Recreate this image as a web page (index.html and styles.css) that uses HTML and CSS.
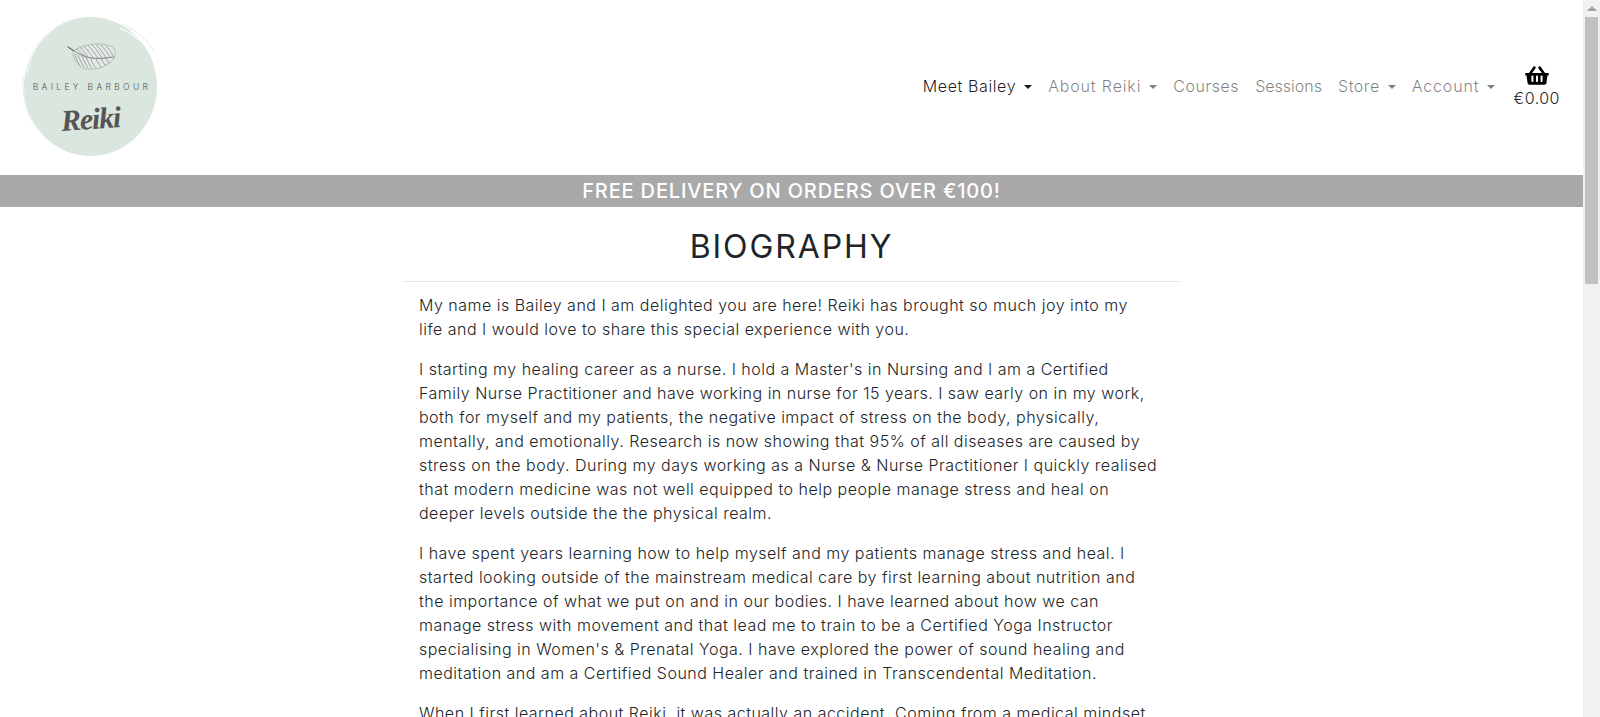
FILE: index.html
```html
<!DOCTYPE html>
<html lang="en">
<head>
<meta charset="utf-8">
<title>Biography</title>
<link rel="stylesheet" href="styles.css">
</head>
<body>
<div class="page">
  <div class="viewport">
    <header class="site-header">
      <a class="logo" href="#">
        <span class="logo-disc">
          <svg class="logo-paint" viewBox="0 0 145 151" width="145" height="151" aria-hidden="true">
            <ellipse cx="72.5" cy="75.5" rx="66.5" ry="69.5" fill="#dbe6df"/>
            <path d="M102 17 C115 23 125 30 132 40" fill="none" stroke="#fff" stroke-width="1.2"/>
            <path d="M104 13 C118 19 130 29 137 42" fill="none" stroke="#e3ebe6" stroke-width="1"/>
            <path d="M9 62 C12 44 21 28 36 18" fill="none" stroke="#fff" stroke-width="1"/>
            <path d="M5 66 C4 84 8 102 18 116" fill="none" stroke="#e3ebe6" stroke-width="1"/>
            <path d="M40 142 C56 148 84 149 104 141" fill="none" stroke="#fff" stroke-width="1"/>
          </svg>
          <svg class="feather" viewBox="66 42 50 30" width="50" height="30" aria-hidden="true">
            <g fill="none" stroke-linecap="round">
              <path d="M67 47 L73 51" stroke="#3f3f3f" stroke-width="1"/>
              <path d="M72 51 C79 47 87 44 96 44 C105 44 113 46 114 51 C115 58 110 63 103 66 C95 70 87 70 82 68 C76 65 72 59 72 51Z" fill="#e3e9e5" stroke="#8a908d" stroke-width=".5"/>
              <path d="M72 50 C78 54 83 57 90 58 C98 59 106 58 113 57" stroke="#555a57" stroke-width=".7"/>
              <path d="M76 49 C78 51 81 54 84 56 M79 47.5 C82 50 85 54 87 57 M83 46.500 C86 49 89 53 92 57.500 M87 45.500 C90 48 94 54 97 58 M91 45 C94 47 98 53 101 58 M95 45 C98 47 102 53 105 58 M100 45 C103 48 106 52 109 57 M105 46 C108 48 110 52 112 56" stroke="#767c79" stroke-width=".6"/>
              <path d="M74 54 C75 59 77 63 79 65 M77 55 C79 60 81 64 83 67 M81 56 C83 61 85 65 87 68 M85 57 C87 62 89 66 91 68.500 M90 59 C91 62 93 66 95 68 M95 59 C96 62 98 64 100 67 M100 59 C101 61 103 63 104 65 M105 58 C106 60 107 61 108 63" stroke="#767c79" stroke-width=".6"/>
            </g>
          </svg>
          <span class="logo-name">BAILEY BARBOUR</span>
          <span class="logo-script">Reiki</span>
        </span>
      </a>
      <nav class="main-nav">
        <a class="nav-link active caret" href="#">Meet Bailey</a>
        <a class="nav-link caret nav-wide" href="#">About Reiki</a>
        <a class="nav-link" href="#">Courses</a>
        <a class="nav-link nav-narrow" href="#">Sessions</a>
        <a class="nav-link caret" href="#">Store</a>
        <a class="nav-link caret nav-wide" href="#">Account</a>
        <a class="cart" href="#">
          <svg class="basket" viewBox="0 0 576 512" width="24" height="21" aria-hidden="true"><path d="M576 216v16c0 13.255-10.745 24-24 24h-8l-26.113 182.788C514.509 462.435 494.257 480 470.37 480H105.63c-23.887 0-44.139-17.565-47.518-41.212L32 256h-8c-13.255 0-24-10.745-24-24v-16c0-13.255 10.745-24 24-24h67.341l106.78-146.821c10.395-14.292 30.407-17.453 44.701-7.058 14.293 10.395 17.453 30.408 7.058 44.701L170.477 192h235.046L326.12 82.821c-10.395-14.292-7.234-34.306 7.059-44.701 14.291-10.395 34.306-7.235 44.701 7.058L484.659 192H552c13.255 0 24 10.745 24 24zM312 392V280c0-13.255-10.745-24-24-24s-24 10.745-24 24v112c0 13.255 10.745 24 24 24s24-10.745 24-24zm112 0V280c0-13.255-10.745-24-24-24s-24 10.745-24 24v112c0 13.255 10.745 24 24 24s24-10.745 24-24zm-224 0V280c0-13.255-10.745-24-24-24s-24 10.745-24 24v112c0 13.255 10.745 24 24 24s24-10.745 24-24z"/></svg>
          <span>€0.00</span>
        </a>
      </nav>
    </header>
    <div class="banner">FREE DELIVERY ON ORDERS OVER €100!</div>
    <main class="content">
      <h1 class="title">BIOGRAPHY</h1>
      <div class="bio">
        <p>My name is Bailey and I am delighted you are here! Reiki has brought so much joy into my<br>life and I would love to share this special experience with you.</p>
        <p>I starting my healing career as a nurse. I hold a Master's in Nursing and I am a Certified<br>Family Nurse Practitioner and have working in nurse for 15 years. I saw early on in my work,<br>both for myself and my patients, the negative impact of stress on the body, physically,<br>mentally, and emotionally. Research is now showing that 95% of all diseases are caused by<br>stress on the body. During my days working as a Nurse &amp; Nurse Practitioner I quickly realised<br>that modern medicine was not well equipped to help people manage stress and heal on<br>deeper levels outside the the physical realm.</p>
        <p>I have spent years learning how to help myself and my patients manage stress and heal. I<br>started looking outside of the mainstream medical care by first learning about nutrition and<br>the importance of what we put on and in our bodies. I have learned about how we can<br>manage stress with movement and that lead me to train to be a Certified Yoga Instructor<br>specialising in Women's &amp; Prenatal Yoga. I have explored the power of sound healing and<br>meditation and am a Certified Sound Healer and trained in Transcendental Meditation.</p>
        <p>When I first learned about Reiki, it was actually an accident. Coming from a medical mindset</p>
      </div>
    </main>
  </div>
  <div class="scrollbar">
    <span class="sb-btn"><span class="sb-arrow"></span></span>
    <span class="sb-thumb"></span>
  </div>
</div>
</body>
</html>
```
FILE: styles.css
```css
* { box-sizing: border-box; }
html, body { margin: 0; height: 100%; overflow: hidden; background: #fff; }
body { font-family: Inter, "Open Sans", sans-serif; font-size: 16px; line-height: 24px; color: #212529; }
a { text-decoration: none; color: inherit; }

.page { display: flex; height: 717px; }
.viewport { flex: 1; min-width: 0; overflow: hidden; }

.scrollbar { width: 17px; flex: none; background: #f1f1f1; display: flex; flex-direction: column; }
.sb-btn { height: 17px; display: flex; align-items: center; justify-content: center; }
.sb-arrow { width: 0; height: 0; border-left: 5px solid transparent; border-right: 5px solid transparent; border-bottom: 5px solid #a3a3a3; }
.sb-thumb { height: 267px; margin: 0 2px; background: #c1c1c1; }

.site-header { height: 175px; display: flex; align-items: center; justify-content: space-between; padding: 0 23px 0 24px; }
.logo { display: block; margin-bottom: 2px; }
.logo-disc { position: relative; width: 133px; height: 139px; display: flex; flex-direction: column; align-items: center; color: #555; padding-top: 25px; }
.logo-paint { position: absolute; left: -6px; top: -6px; }
.feather { display: block; position: relative; margin-left: 2px; filter: blur(.25px); }
.logo-name { position: relative; font-size: 8.5px; line-height: 10px; font-weight: 300; letter-spacing: 3.35px; margin-top: 10px; margin-right: -3px; white-space: nowrap; }
.logo-script { position: relative; font-family: "Liberation Serif", serif; font-style: italic; font-weight: bold; font-size: 30px; line-height: 36px; letter-spacing: -1.2px; margin-top: 9px; color: #555; transform: rotate(-4deg); }

.main-nav { display: flex; align-items: center; }
.nav-link { padding: 8px 8px 12px; color: rgba(0,0,0,.5); letter-spacing: .55px; white-space: nowrap; display: block; font-weight: 300; }
.nav-wide { letter-spacing: .85px; }
.nav-narrow { letter-spacing: 0; }
.nav-link.active { color: rgba(0,0,0,.9); letter-spacing: .6px; }
.caret::after { content: ""; display: inline-block; margin-left: 8px; vertical-align: 3px; border-top: 4.8px solid; border-left: 4.8px solid transparent; border-right: 4.8px solid transparent; }
.cart { display: flex; flex-direction: column; align-items: center; color: #212529; margin-left: 10px; font-weight: 300; letter-spacing: .5px; }
.basket { display: block; }

.banner { height: 32px; background: #a9a9a9; color: #fff; text-align: center; font-size: 20px; line-height: 32px; font-weight: 500; letter-spacing: .84px; }

.content { width: 777px; margin: 0 auto; }
.title { margin: 0; font-size: 32px; line-height: 38px; padding: 21px 0 16px; font-weight: 400; text-align: center; letter-spacing: 1.9px; color: #212529; border-bottom: 1px solid #e5e5e5; height: 75px; }
.bio { padding: 11px 16px 0; font-weight: 300; letter-spacing: .49px; }
.bio p { margin: 0 0 16px; white-space: nowrap; }
```
